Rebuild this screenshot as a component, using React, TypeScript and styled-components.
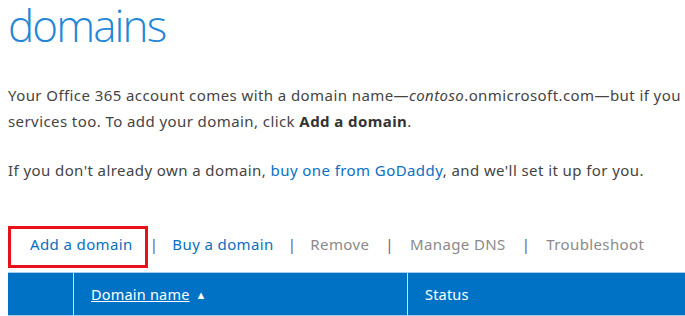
import React from 'react';
import styled, { createGlobalStyle } from 'styled-components';

const GlobalStyle = createGlobalStyle`
  html, body {
    margin: 0;
    padding: 0;
    background: #ffffff;
    overflow: hidden;
  }
  body {
    font-family: "Noto Sans", "Open Sans", sans-serif;
  }
`;

const App = () => {
  return (
    <Page>
      <GlobalStyle />
      <Title>domains</Title>
      <Intro>
        Your Office 365 account comes with a domain name—<em>contoso</em>.onmicrosoft.com—but if you
        have your own domain name, you can use it with Office 365
        <br />
        services too. To add your domain, click <strong>Add a domain</strong>.
      </Intro>
      <Intro>
        If you don't already own a domain, <InlineLink>buy one from GoDaddy</InlineLink>, and we'll
        set it up for you.
      </Intro>
      <Toolbar>
        <Highlight>
          <Action>Add a domain</Action>
        </Highlight>
        <Sep tight>|</Sep>
        <Action>Buy a domain</Action>
        <Sep>|</Sep>
        <Action disabled>Remove</Action>
        <Sep wide>|</Sep>
        <Action disabled>Manage DNS</Action>
        <Sep wide>|</Sep>
        <Action disabled>Troubleshoot</Action>
      </Toolbar>
      <HeaderRow>
        <HeaderCell />
        <HeaderCell>
          <SortLabel>Domain name</SortLabel>
          <SortArrow>▲</SortArrow>
        </HeaderCell>
        <HeaderCell>Status</HeaderCell>
      </HeaderRow>
    </Page>
  );
};

const Page = styled.div`
  width: 1000px;
  padding: 0 8px;
`;

const Title = styled.h1`
  margin: -5px 0 0;
  font-family: "Open Sans", sans-serif;
  font-weight: 300;
  font-size: 44px;
  line-height: 60px;
  letter-spacing: -1.9px;
  color: #2386d8;
`;

const Intro = styled.p`
  margin: 27px 0 0;
  font-size: 15px;
  letter-spacing: 0.42px;
  line-height: 26px;
  color: #444444;
  white-space: nowrap;

  & + & {
    margin-top: 23px;
  }

  strong {
    font-weight: 700;
    color: #333333;
  }
`;

const InlineLink = styled.span`
  color: #0a6fc2;
`;

const Toolbar = styled.div`
  display: flex;
  align-items: center;
  margin-top: 43px;
  height: 42px;
  font-size: 15px;
  letter-spacing: 0.38px;
`;

const Highlight = styled.div`
  display: flex;
  align-items: center;
  height: 100%;
  box-sizing: border-box;
  border: 3px solid #e8101a;
  padding: 0 12px 0 19px;
`;

const Action = styled.span<{ disabled?: boolean }>`
  display: inline-block;
  padding-bottom: 6px;
  color: ${p => (p.disabled ? '#8a8a8a' : '#0a6fc2')};
  white-space: nowrap;
`;

const Sep = styled.span<{ tight?: boolean; wide?: boolean }>`
  display: inline-block;
  padding-bottom: 6px;
  color: #66608a;
  margin: 0 ${p => (p.wide ? '16px' : '14px')} 0
    ${p => (p.tight ? '2px' : p.wide ? '16px' : '14px')};
`;

const HeaderRow = styled.div`
  display: grid;
  grid-template-columns: 65px 334px 274px;
  margin-top: 4px;
  height: 44px;
  background: #0072c6;
  border-top: 1px solid #a9cdee;
  border-bottom: 1px solid #a9cdee;
  box-sizing: border-box;
`;

const HeaderCell = styled.div`
  display: flex;
  align-items: center;
  padding-left: 17px;
  color: #ffffff;
  font-size: 14.5px;
  letter-spacing: 0.2px;
  border-left: 1px solid #cfe2f4;

  &:first-child {
    border-left: none;
  }
`;

const SortLabel = styled.span`
  text-decoration: underline;
`;

const SortArrow = styled.span`
  font-size: 11px;
  margin-left: 6px;
`;

export default App;
